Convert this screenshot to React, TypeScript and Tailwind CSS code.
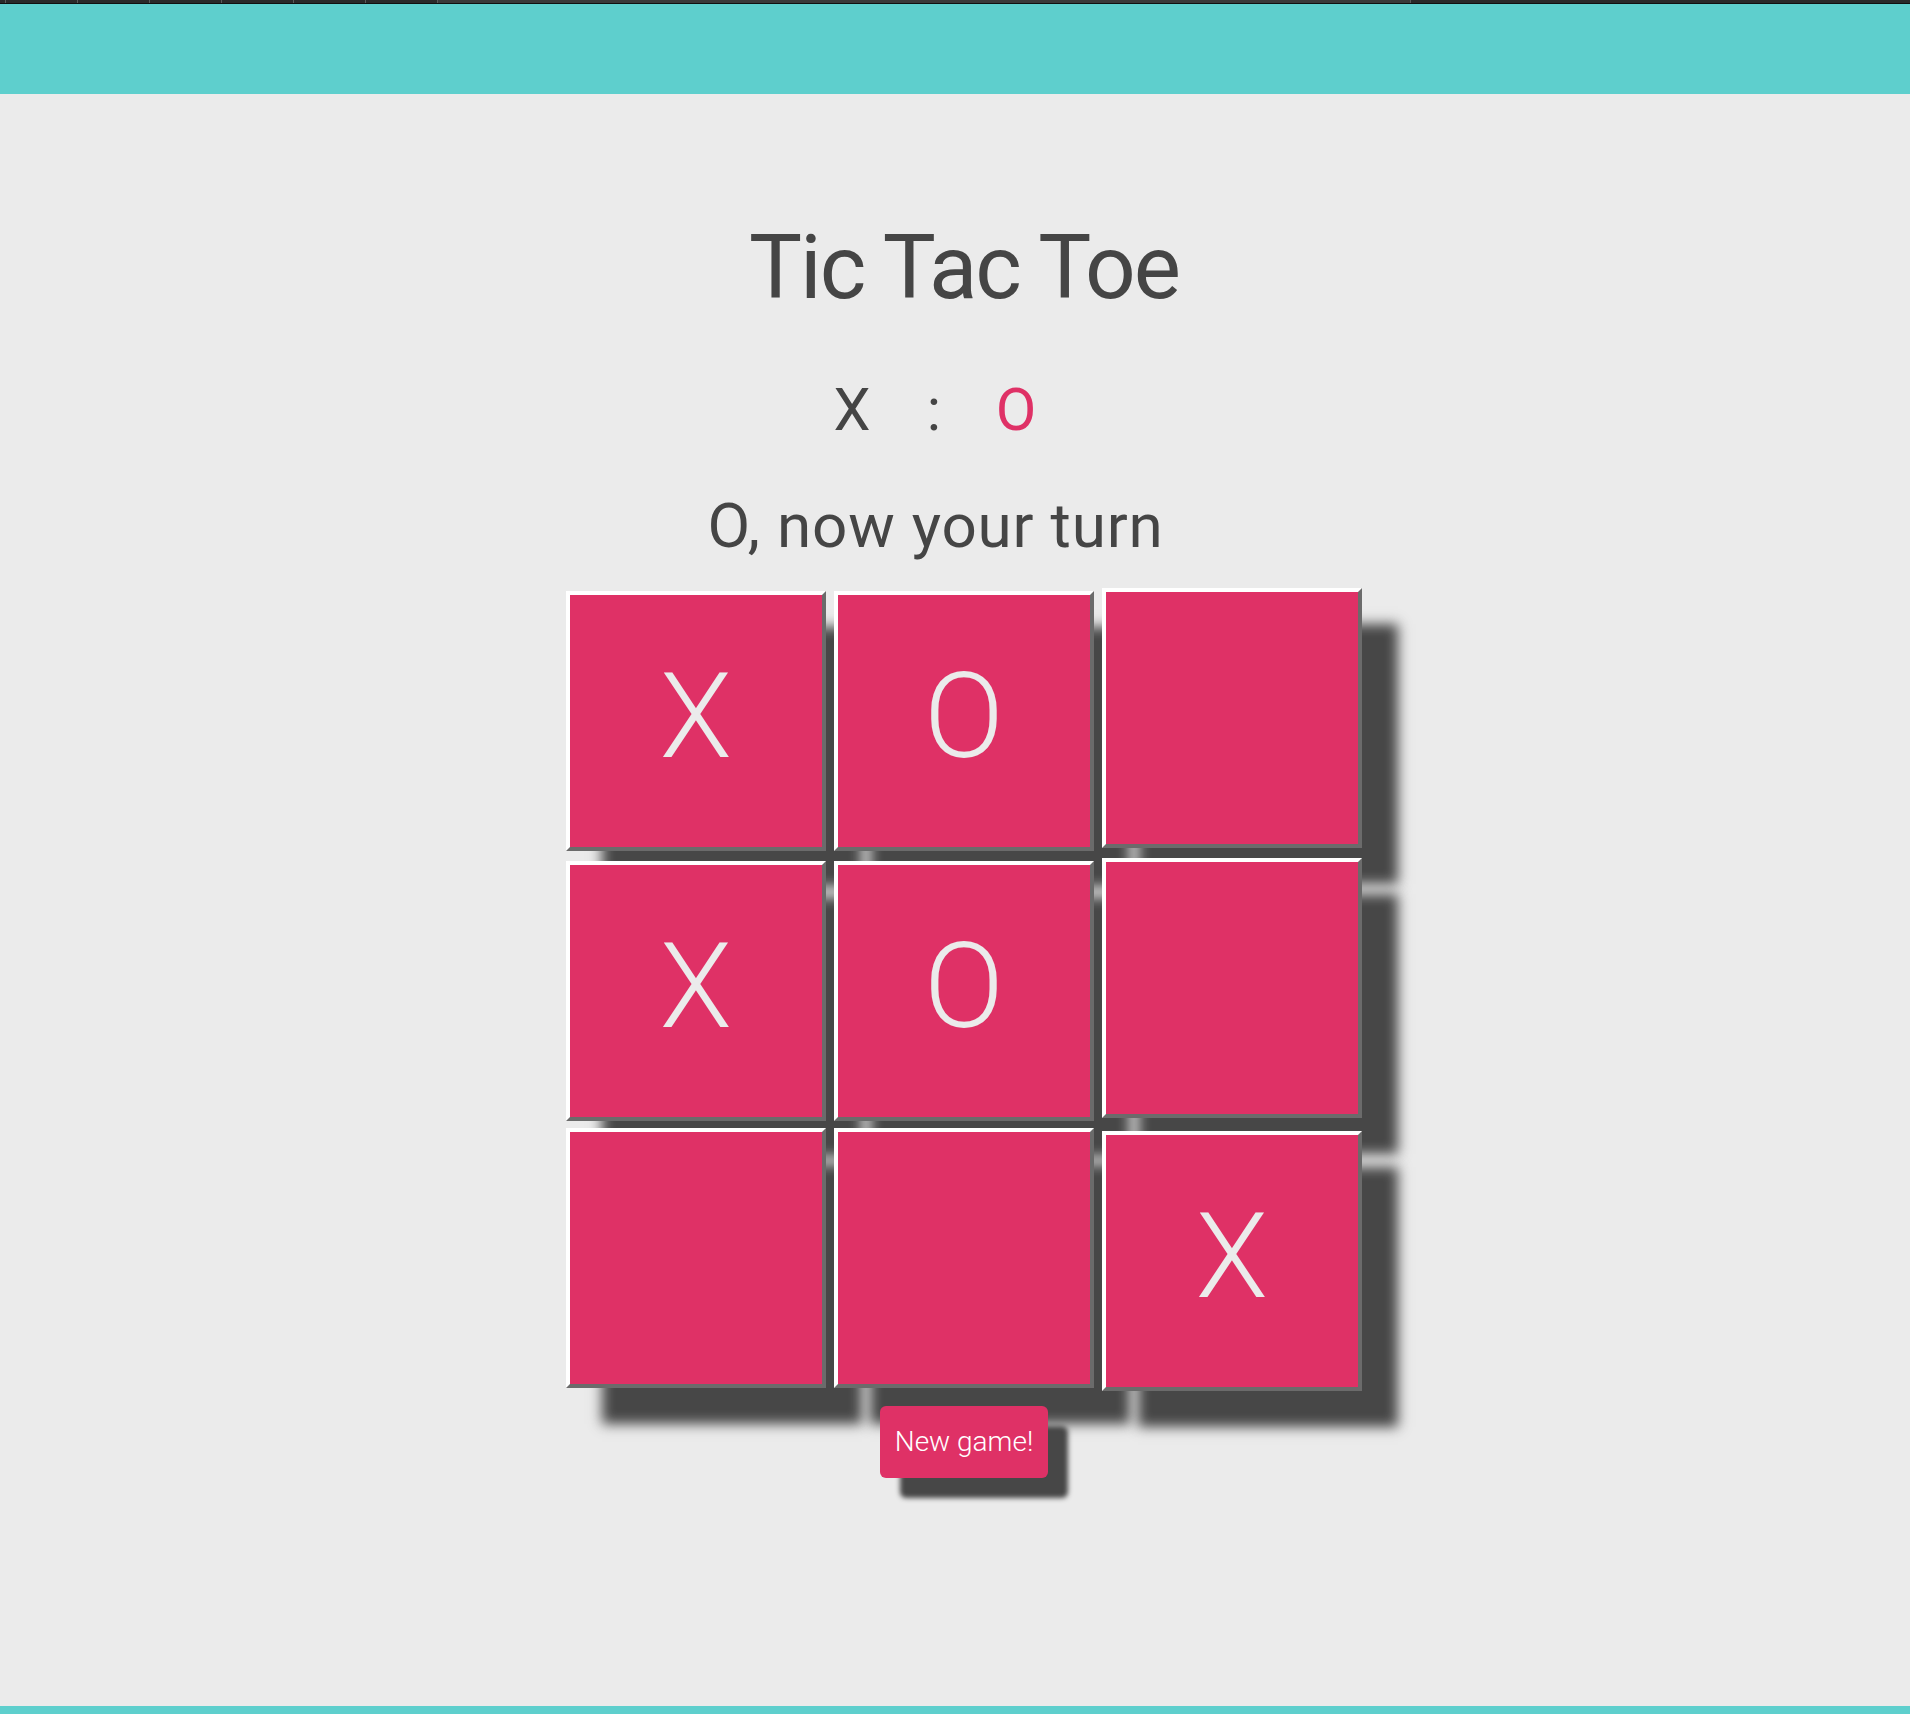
import React from "react";

const cells: string[][] = [
  ["X", "O", ""],
  ["X", "O", ""],
  ["", "", "X"],
];

function Cell({ v }: { v: string }) {
  return (
    <div
      className={
        "w-[260px] h-[260px] shrink-0 bg-[#df3166] border-4 border-t-white border-l-white border-r-[#6b6b6b] border-b-[#6b6b6b] shadow-[36px_36px_12px_#474747] flex items-center justify-center pb-[9px] " +
        (v ? "mt-[3px]" : "")
      }
    >
      <span className="text-[118px] leading-none font-light text-[#ebebeb]">{v}</span>
    </div>
  );
}

export default function App() {
  const ticks = [77, 149, 220, 292, 364, 436];
  return (
    <div
      className="min-h-screen flex flex-col bg-[#ebebeb] text-[#454545]"
      style={{ fontFamily: "Roboto, 'Liberation Sans', sans-serif" }}
    >
      <div className="h-[4px] bg-[#111] flex flex-col">
        <div className="h-[3px] flex bg-[#2a2a2a]">
          <div className="w-[5px]" />
          {ticks.map((t, i) => (
            <div key={i} className="w-[72px] h-[3px] border-l border-[#5a5a5a]" />
          ))}
          <div className="w-[973px] h-[3px] bg-[#3a3a3a] border-l border-[#5a5a5a]" />
          <div className="flex-1 border-l border-[#5a5a5a]" />
        </div>
      </div>
      <div className="h-[90px] bg-[#5ecfcd]" />
      <main className="flex-1 flex flex-col items-center pl-[18px] pt-[129px]">
        <h1 className="text-[89px] leading-none font-normal tracking-[-2px]">Tic Tac Toe</h1>
        <div className="mt-[68px] mr-[60px] flex gap-[52px] text-[59px] leading-none font-normal">
          <span className="w-[30px] flex justify-center">X</span>
          <span className="w-[30px] flex justify-center">:</span>
          <span className="w-[30px] flex justify-center text-[#df3166]">O</span>
        </div>
        <div className="mt-[56px] mr-[57px] text-[62px] leading-none font-normal tracking-[0.8px]">O, now your turn</div>
        <div className="mt-[31px] flex flex-col gap-[10px]">
          {cells.map((row, r) => (
            <div key={r} className="flex items-start gap-[8px] h-[260px]">
              {row.map((v, c) => (
                <Cell key={c} v={v} />
              ))}
            </div>
          ))}
        </div>
        <button className="mt-[18px] bg-[#df3166] text-white rounded-md px-[15px] pt-[22px] pb-[22px] text-[28px] leading-none font-light shadow-[20px_20px_5px_#474747]">
          New game!
        </button>
      </main>
      <div className="h-[8px] bg-[#5ecfcd]" />
    </div>
  );
}
